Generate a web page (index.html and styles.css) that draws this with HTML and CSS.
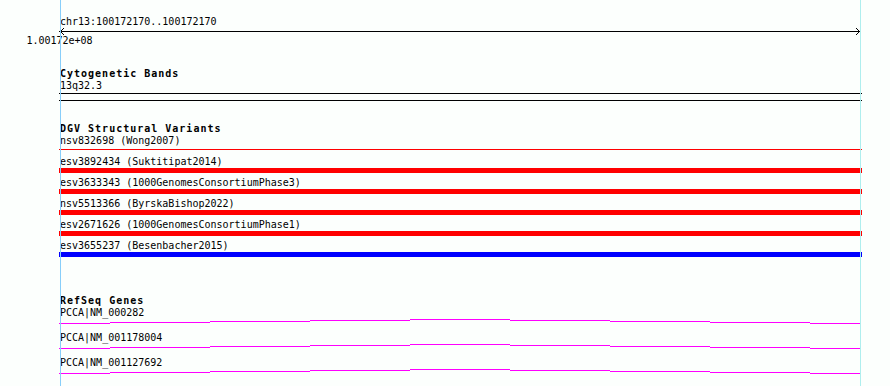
FILE: index.html
```html
<!DOCTYPE html>
<html>
<head>
<meta charset="utf-8">
<link rel="stylesheet" href="styles.css">
</head>
<body>
<div class="browser">
  <div class="ruler">
    <div class="lane">
      <div class="lbl">chr13:100172170..100172170</div>
      <svg class="axis" width="803" height="7" viewBox="0 0 803 7">
        <line x1="0" y1="3.5" x2="802" y2="3.5" stroke="#000" stroke-width="1"/>
        <polyline points="5,0 1.5,3.5 5,7" fill="none" stroke="#000" stroke-width="1"/>
        <polyline points="797,0 800.5,3.5 797,7" fill="none" stroke="#000" stroke-width="1"/>
      </svg>
    </div>
    <div class="tick">1.00172e+08</div>
  </div>

  <section class="track cyto">
    <div class="lane">
      <h2 class="track-title">Cytogenetic Bands</h2>
      <div class="lbl">13q32.3</div>
      <div class="bands"></div>
    </div>
  </section>

  <section class="track dgv">
    <div class="lane">
      <h2 class="track-title">DGV Structural Variants</h2>
      <div class="variant"><div class="lbl">nsv832698 (Wong2007)</div><div class="band thin"></div></div>
      <div class="variant"><div class="lbl">esv3892434 (Suktitipat2014)</div><div class="band gain"></div></div>
      <div class="variant"><div class="lbl">esv3633343 (1000GenomesConsortiumPhase3)</div><div class="band gain"></div></div>
      <div class="variant"><div class="lbl">nsv5513366 (ByrskaBishop2022)</div><div class="band gain"></div></div>
      <div class="variant"><div class="lbl">esv2671626 (1000GenomesConsortiumPhase1)</div><div class="band gain"></div></div>
      <div class="variant"><div class="lbl">esv3655237 (Besenbacher2015)</div><div class="band loss"></div></div>
    </div>
  </section>

  <section class="track refseq">
    <div class="lane">
      <h2 class="track-title">RefSeq Genes</h2>
      <div class="gene">
        <div class="lbl">PCCA|NM_000282</div>
        <svg class="gene-line" width="803" height="14" viewBox="0 0 803 14"><path d="M0 5.5H51M51 4.5H151M151 3.5H251M251 2.5H351M351 1.5H451M451 2.5H551M551 3.5H651M651 4.5H751M751 5.5H802"/></svg>
      </div>
      <div class="gene">
        <div class="lbl">PCCA|NM_001178004</div>
        <svg class="gene-line" width="803" height="14" viewBox="0 0 803 14"><path d="M0 5.5H51M51 4.5H151M151 3.5H251M251 2.5H351M351 1.5H451M451 2.5H551M551 3.5H651M651 4.5H751M751 5.5H802"/></svg>
      </div>
      <div class="gene">
        <div class="lbl">PCCA|NM_001127692</div>
        <svg class="gene-line" width="803" height="14" viewBox="0 0 803 14"><path d="M0 5.5H51M51 4.5H151M151 3.5H251M251 2.5H351M351 1.5H451M451 2.5H551M551 3.5H651M651 4.5H751M751 5.5H802"/></svg>
      </div>
    </div>
  </section>

  <div class="guide guide-left"></div>
  <div class="guide guide-right"></div>
</div>
</body>
</html>
```

FILE: styles.css
```css
* { box-sizing: border-box; margin: 0; padding: 0; }
html, body { background: #fcfffd; }
body {
  margin: 0;
  font-family: "DejaVu Sans Mono", "Liberation Mono", monospace;
  font-size: 10px;
  color: #000;
  overflow: hidden;
}
.browser {
  position: relative;
  width: 890px;
  height: 386px;
  padding-top: 16px;
}
.lane {
  margin-left: 59px;
  width: 803px;
}
.lbl {
  height: 11px;
  line-height: 11px;
  padding-left: 1px;
  white-space: nowrap;
}
.axis { display: block; margin-top: 1px; }
.tick {
  width: 119px;
  height: 11px;
  line-height: 11px;
  text-align: center;
  white-space: nowrap;
}
.track-title {
  font-size: 10px;
  font-weight: bold;
  letter-spacing: 1px;
  height: 11px;
  line-height: 11px;
  padding-left: 1px;
  margin-bottom: 1px;
  white-space: nowrap;
}
.cyto { margin-top: 22px; }
.cyto .bands {
  margin-top: 2px;
  height: 8px;
  border-top: 1px solid #000;
  border-bottom: 1px solid #000;
}
.dgv { margin-top: 22px; }
.band {
  height: 5px;
  margin-top: 1px;
  margin-bottom: 4px;
}
.band.gain { background: #ff0000; }
.band.loss { background: #0000ff; }
.band.thin {
  height: 1px;
  margin-top: 3px;
  margin-bottom: 6px;
  background: #ff0000;
}
.refseq { margin-top: 38px; }
.gene-line { display: block; }
.gene-line path {
  fill: none;
  stroke: #ff00ff;
  stroke-width: 1;
}
.guide {
  position: absolute;
  top: 0;
  bottom: 0;
  width: 1px;
}
.guide-left { left: 60px; background: #87cefa; }
.guide-right { left: 860px; background: #aeeeee; }
```
